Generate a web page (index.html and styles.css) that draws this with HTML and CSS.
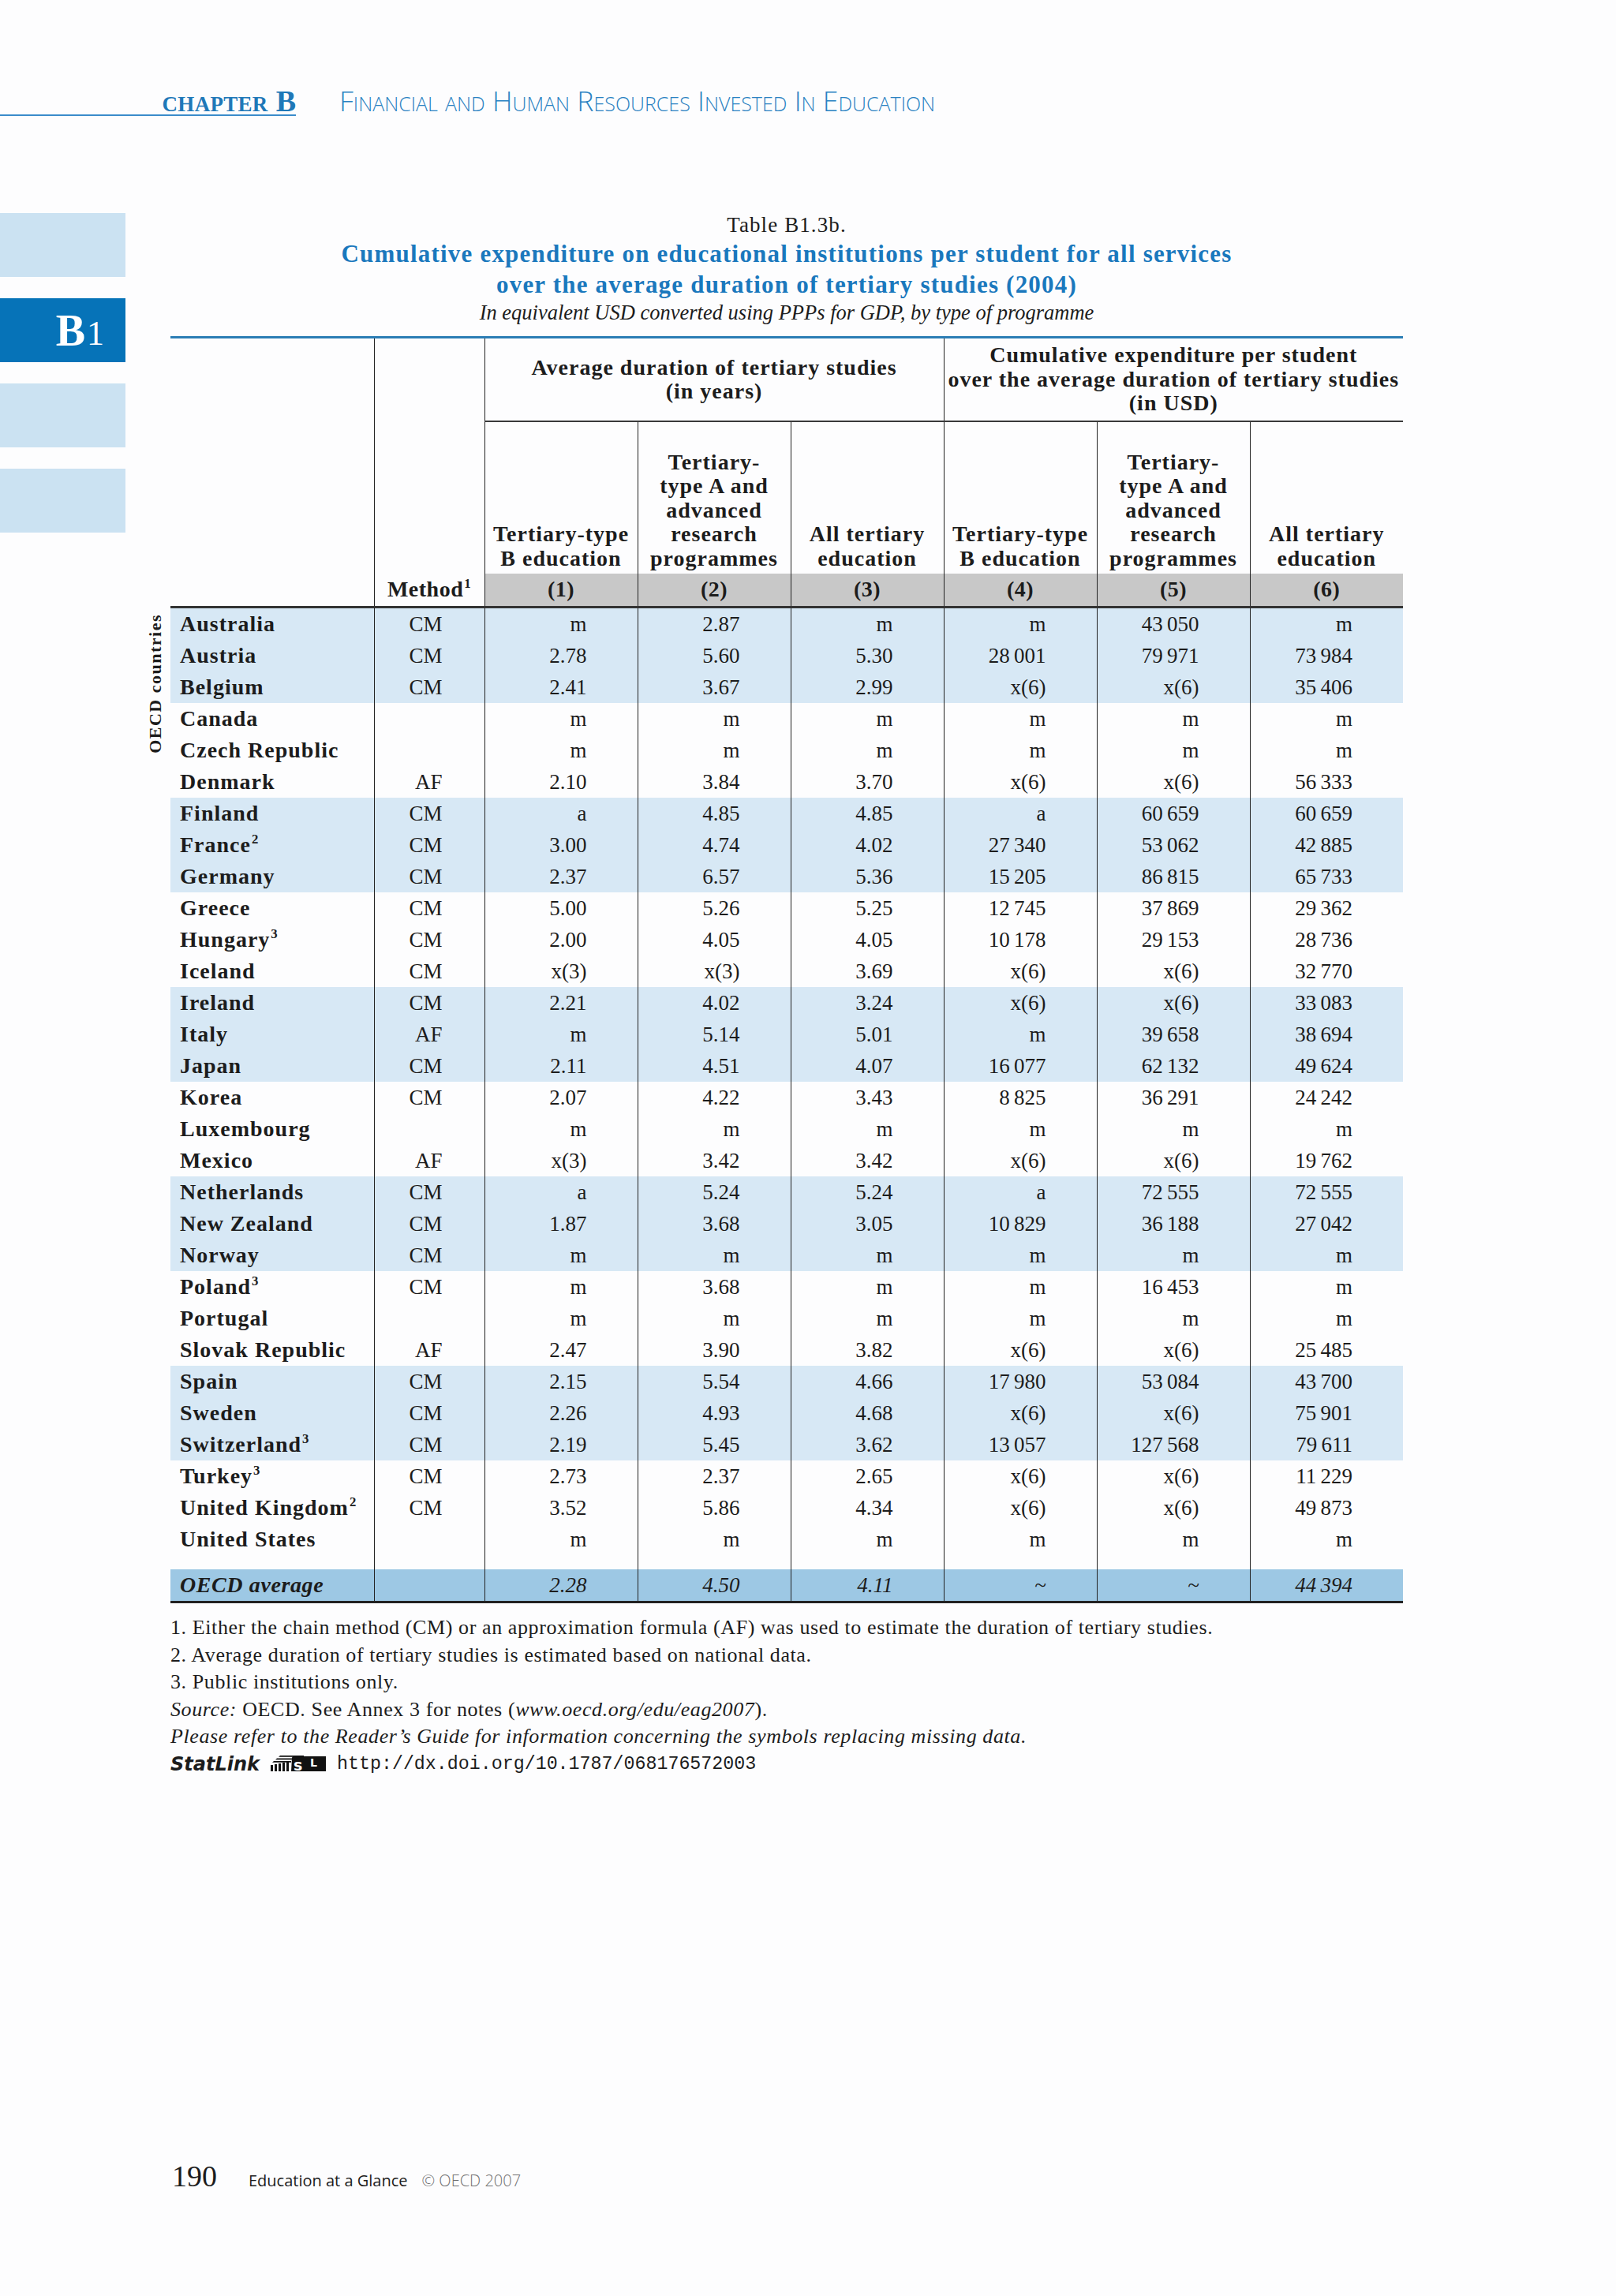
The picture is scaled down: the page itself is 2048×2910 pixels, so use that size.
FILE: index.html
```html
<!DOCTYPE html>
<html lang="en">
<head>
<meta charset="utf-8">
<title>Table B1.3b</title>
<link rel="stylesheet" href="styles.css">
</head>
<body>
<div class="page">
  <header class="running-head">
    <div class="chapter"><span class="word">CHAPTER</span><span class="letter">B</span></div>
    <div class="section-title">Financial and Human Resources Invested In Education</div>
  </header>

  <div class="content">
    <nav class="tabs">
      <div class="tab"></div>
      <div class="tab active"><span class="b">B</span><span class="n">1</span></div>
      <div class="tab"></div>
      <div class="tab"></div>
    </nav>

    <div class="side"><div class="side-label">OECD countries</div></div>

    <main class="main">
      <div class="caption">
        <div class="table-no">Table B1.3b.</div>
        <div class="title">Cumulative expenditure on educational institutions per student for all services<br>over the average duration of tertiary studies (2004)</div>
        <div class="subtitle">In equivalent USD converted using PPPs for GDP, by type of programme</div>
      </div>

      <table class="data">
        <colgroup>
          <col class="c-country"><col class="c-method">
          <col class="c-num"><col class="c-num"><col class="c-num"><col class="c-num"><col class="c-num"><col class="c-num">
        </colgroup>
        <thead>
          <tr class="h-group">
            <th rowspan="3" class="h-country"></th>
            <th rowspan="2" class="h-method"></th>
            <th colspan="3" class="grp">Average duration of tertiary studies<br>(in years)</th>
            <th colspan="3" class="grp">Cumulative expenditure per student<br>over the average duration of tertiary studies<br>(in USD)</th>
          </tr>
          <tr class="h-cols">
            <th>Tertiary-type<br>B education</th>
            <th>Tertiary-<br>type A and<br>advanced<br>research<br>programmes</th>
            <th>All tertiary<br>education</th>
            <th>Tertiary-type<br>B education</th>
            <th>Tertiary-<br>type A and<br>advanced<br>research<br>programmes</th>
            <th>All tertiary<br>education</th>
          </tr>
          <tr class="h-nums">
            <th class="h-methodlbl">Method<sup>1</sup></th>
            <th class="g">(1)</th><th class="g">(2)</th><th class="g">(3)</th><th class="g">(4)</th><th class="g">(5)</th><th class="g">(6)</th>
          </tr>
        </thead>
        <tbody>
          <tr class="band first"><td class="cty">Australia</td><td class="mth">CM</td><td>m</td><td>2.87</td><td>m</td><td>m</td><td>43&thinsp;050</td><td>m</td></tr>
          <tr class="band"><td class="cty">Austria</td><td class="mth">CM</td><td>2.78</td><td>5.60</td><td>5.30</td><td>28&thinsp;001</td><td>79&thinsp;971</td><td>73&thinsp;984</td></tr>
          <tr class="band"><td class="cty">Belgium</td><td class="mth">CM</td><td>2.41</td><td>3.67</td><td>2.99</td><td>x(6)</td><td>x(6)</td><td>35&thinsp;406</td></tr>
          <tr><td class="cty">Canada</td><td class="mth"></td><td>m</td><td>m</td><td>m</td><td>m</td><td>m</td><td>m</td></tr>
          <tr><td class="cty">Czech Republic</td><td class="mth"></td><td>m</td><td>m</td><td>m</td><td>m</td><td>m</td><td>m</td></tr>
          <tr><td class="cty">Denmark</td><td class="mth">AF</td><td>2.10</td><td>3.84</td><td>3.70</td><td>x(6)</td><td>x(6)</td><td>56&thinsp;333</td></tr>
          <tr class="band"><td class="cty">Finland</td><td class="mth">CM</td><td>a</td><td>4.85</td><td>4.85</td><td>a</td><td>60&thinsp;659</td><td>60&thinsp;659</td></tr>
          <tr class="band"><td class="cty">France<sup>2</sup></td><td class="mth">CM</td><td>3.00</td><td>4.74</td><td>4.02</td><td>27&thinsp;340</td><td>53&thinsp;062</td><td>42&thinsp;885</td></tr>
          <tr class="band"><td class="cty">Germany</td><td class="mth">CM</td><td>2.37</td><td>6.57</td><td>5.36</td><td>15&thinsp;205</td><td>86&thinsp;815</td><td>65&thinsp;733</td></tr>
          <tr><td class="cty">Greece</td><td class="mth">CM</td><td>5.00</td><td>5.26</td><td>5.25</td><td>12&thinsp;745</td><td>37&thinsp;869</td><td>29&thinsp;362</td></tr>
          <tr><td class="cty">Hungary<sup>3</sup></td><td class="mth">CM</td><td>2.00</td><td>4.05</td><td>4.05</td><td>10&thinsp;178</td><td>29&thinsp;153</td><td>28&thinsp;736</td></tr>
          <tr><td class="cty">Iceland</td><td class="mth">CM</td><td>x(3)</td><td>x(3)</td><td>3.69</td><td>x(6)</td><td>x(6)</td><td>32&thinsp;770</td></tr>
          <tr class="band"><td class="cty">Ireland</td><td class="mth">CM</td><td>2.21</td><td>4.02</td><td>3.24</td><td>x(6)</td><td>x(6)</td><td>33&thinsp;083</td></tr>
          <tr class="band"><td class="cty">Italy</td><td class="mth">AF</td><td>m</td><td>5.14</td><td>5.01</td><td>m</td><td>39&thinsp;658</td><td>38&thinsp;694</td></tr>
          <tr class="band"><td class="cty">Japan</td><td class="mth">CM</td><td>2.11</td><td>4.51</td><td>4.07</td><td>16&thinsp;077</td><td>62&thinsp;132</td><td>49&thinsp;624</td></tr>
          <tr><td class="cty">Korea</td><td class="mth">CM</td><td>2.07</td><td>4.22</td><td>3.43</td><td>8&thinsp;825</td><td>36&thinsp;291</td><td>24&thinsp;242</td></tr>
          <tr><td class="cty">Luxembourg</td><td class="mth"></td><td>m</td><td>m</td><td>m</td><td>m</td><td>m</td><td>m</td></tr>
          <tr><td class="cty">Mexico</td><td class="mth">AF</td><td>x(3)</td><td>3.42</td><td>3.42</td><td>x(6)</td><td>x(6)</td><td>19&thinsp;762</td></tr>
          <tr class="band"><td class="cty">Netherlands</td><td class="mth">CM</td><td>a</td><td>5.24</td><td>5.24</td><td>a</td><td>72&thinsp;555</td><td>72&thinsp;555</td></tr>
          <tr class="band"><td class="cty">New Zealand</td><td class="mth">CM</td><td>1.87</td><td>3.68</td><td>3.05</td><td>10&thinsp;829</td><td>36&thinsp;188</td><td>27&thinsp;042</td></tr>
          <tr class="band"><td class="cty">Norway</td><td class="mth">CM</td><td>m</td><td>m</td><td>m</td><td>m</td><td>m</td><td>m</td></tr>
          <tr><td class="cty">Poland<sup>3</sup></td><td class="mth">CM</td><td>m</td><td>3.68</td><td>m</td><td>m</td><td>16&thinsp;453</td><td>m</td></tr>
          <tr><td class="cty">Portugal</td><td class="mth"></td><td>m</td><td>m</td><td>m</td><td>m</td><td>m</td><td>m</td></tr>
          <tr><td class="cty">Slovak Republic</td><td class="mth">AF</td><td>2.47</td><td>3.90</td><td>3.82</td><td>x(6)</td><td>x(6)</td><td>25&thinsp;485</td></tr>
          <tr class="band"><td class="cty">Spain</td><td class="mth">CM</td><td>2.15</td><td>5.54</td><td>4.66</td><td>17&thinsp;980</td><td>53&thinsp;084</td><td>43&thinsp;700</td></tr>
          <tr class="band"><td class="cty">Sweden</td><td class="mth">CM</td><td>2.26</td><td>4.93</td><td>4.68</td><td>x(6)</td><td>x(6)</td><td>75&thinsp;901</td></tr>
          <tr class="band"><td class="cty">Switzerland<sup>3</sup></td><td class="mth">CM</td><td>2.19</td><td>5.45</td><td>3.62</td><td>13&thinsp;057</td><td>127&thinsp;568</td><td>79&thinsp;611</td></tr>
          <tr><td class="cty">Turkey<sup>3</sup></td><td class="mth">CM</td><td>2.73</td><td>2.37</td><td>2.65</td><td>x(6)</td><td>x(6)</td><td>11&thinsp;229</td></tr>
          <tr><td class="cty">United Kingdom<sup>2</sup></td><td class="mth">CM</td><td>3.52</td><td>5.86</td><td>4.34</td><td>x(6)</td><td>x(6)</td><td>49&thinsp;873</td></tr>
          <tr><td class="cty">United States</td><td class="mth"></td><td>m</td><td>m</td><td>m</td><td>m</td><td>m</td><td>m</td></tr>
          <tr class="spacer"><td class="cty"></td><td></td><td></td><td></td><td></td><td></td><td></td><td></td></tr>
          <tr class="avg"><td class="cty">OECD average</td><td class="mth"></td><td>2.28</td><td>4.50</td><td>4.11</td><td>~</td><td>~</td><td>44&thinsp;394</td></tr>
        </tbody>
      </table>

      <div class="notes">
        <p>1. Either the chain method (CM) or an approximation formula (AF) was used to estimate the duration of tertiary studies.</p>
        <p>2. Average duration of tertiary studies is estimated based on national data.</p>
        <p>3. Public institutions only.</p>
        <p><em>Source:</em> OECD. See Annex 3 for notes (<em>www.oecd.org/edu/eag2007</em>).</p>
        <p class="please">Please refer to the Reader’s Guide for information concerning the symbols replacing missing data.</p>
        <p class="statlink"><span class="sl-word">StatLink</span>
          <svg class="sl-icon" viewBox="0 0 74 26" width="74" height="26" aria-hidden="true">
            <g fill="#111">
              <path d="M14 2 H44 V3.8 H12 Z"/>
              <path d="M10 5.5 H44 V7.3 H8 Z"/>
              <path d="M6 9 H28 V10.8 H4 Z"/>
              <rect x="2" y="14" width="3" height="8"/>
              <rect x="7" y="13" width="3" height="9"/>
              <rect x="12" y="12" width="3" height="10"/>
              <rect x="17" y="11" width="3" height="11"/>
              <rect x="22" y="10" width="3" height="12"/>
              <path d="M29 5 Q29 3 31 3 H72 V22 H28 Z"/>
            </g>
            <text x="31" y="21" fill="#fff" font-family="DejaVu Sans" font-weight="bold" font-size="19">s</text>
            <text x="52" y="16" fill="#fff" font-family="DejaVu Sans" font-weight="bold" font-size="14">L</text>
          </svg>
          <span class="sl-url">http://dx.doi.org/10.1787/068176572003</span></p>
      </div>
    </main>
  </div>

  <footer class="footer">
    <span class="pg">190</span>
    <span class="pub">Education at a Glance</span>
    <span class="copy">© OECD 2007</span>
  </footer>
</div>
</body>
</html>
```
FILE: styles.css
```css
html, body {
  margin: 0;
  padding: 0;
  background: #fdfdfe;
}
body {
  font-family: "Liberation Serif", "Times New Roman", serif;
  color: #1c1c1c;
}
.page {
  width: 2048px;
  height: 2910px;
  display: flex;
  flex-direction: column;
  overflow: hidden;
}

/* running head */
.running-head {
  height: 148px;
  box-sizing: border-box;
  padding-top: 112px;
  display: flex;
  align-items: baseline;
}
.chapter {
  width: 375px;
  box-sizing: border-box;
  text-align: right;
  color: #1f78b8;
  border-bottom: 2px solid #3b8ccb;
  font-size: 38px;
  line-height: 26px;
  padding-bottom: 0;
  font-weight: bold;
}
.chapter .word {
  font-size: 27px;
  letter-spacing: 0.3px;
}
.chapter .letter {
  font-size: 38px;
  margin-left: 10px;
}
.section-title {
  margin-left: 55px;
  font-family: "Open Sans", "DejaVu Sans", sans-serif;
  font-weight: 300;
  font-variant: small-caps;
  font-size: 35.5px;
  color: #2a82c2;
  line-height: 30px;
}

/* content area */
.content {
  display: flex;
  margin-top: 122px;
}
.tabs {
  width: 159px;
  flex-shrink: 0;
  display: flex;
  flex-direction: column;
  gap: 27px;
}
.tab {
  height: 81px;
  background: #cbe2f2;
}
.tab.active {
  background: #0673b8;
  color: #ffffff;
  display: flex;
  align-items: center;
  justify-content: flex-end;
  padding-right: 27px;
  font-weight: bold;
  line-height: 1;
}
.tab.active .b { font-size: 56px; }
.tab.active .n { font-size: 44px; font-weight: normal; margin-left: 2px; padding-top: 8px; }

.side {
  width: 57px;
  flex-shrink: 0;
  box-sizing: border-box;
  padding-top: 508px;
  padding-left: 26px;
}
.side-label {
  writing-mode: vertical-rl;
  transform: rotate(180deg);
  font-weight: bold;
  font-size: 22px;
  letter-spacing: 1.5px;
  line-height: 24px;
  color: #1c1c1c;
}

.main {
  width: 1562px;
  flex-shrink: 0;
}
.caption {
  text-align: center;
}
.table-no {
  font-size: 27px;
  line-height: 30px;
  letter-spacing: 1.1px;
}
.title {
  margin-top: 2px;
  color: #1a78bd;
  font-weight: bold;
  font-size: 31px;
  line-height: 39px;
  letter-spacing: 1.2px;
}
.subtitle {
  font-style: italic;
  font-size: 26.5px;
  line-height: 32px;
}

/* table */
table.data {
  margin-top: 14px;
  width: 1562px;
  table-layout: fixed;
  border-collapse: collapse;
  border-top: 3px solid #2b7db5;
  font-size: 27px;
}
col.c-country { width: 258px; }
col.c-method { width: 140px; }
col.c-num { width: 194px; }

th {
  font-weight: bold;
  font-size: 28px;
  letter-spacing: 1px;
  line-height: 30.5px;
  padding: 0;
  color: #1c1c1c;
}
.h-group th { height: 104px; }
.h-country { border-right: 1px solid #222; }
.h-method { border-right: 1px solid #222; }
th.grp {
  border-left: 1px solid #222;
  border-bottom: 2px solid #3a3a3a;
  vertical-align: middle;
}
.h-cols th {
  height: 188px;
  vertical-align: bottom;
  padding-bottom: 4px;
  border-left: 1px solid #222;
}
.h-nums th {
  height: 41px;
  vertical-align: middle;
  border-left: 1px solid #222;
  letter-spacing: 0.5px;
}
.h-nums th.g {
  background: #c8c8c8;
}
.h-methodlbl { text-align: center; }

sup {
  font-size: 0.6em;
  line-height: 0;
  vertical-align: 0.65em;
  margin-left: 1px;
}

tbody td {
  height: 40px;
  padding: 0 64px 0 0;
  text-align: right;
  vertical-align: middle;
  line-height: 40px;
  border-left: 1px solid #222;
  white-space: nowrap;
}
tbody td.cty {
  border-left: none;
  text-align: left;
  padding: 0 0 0 12px;
  font-weight: bold;
  font-size: 28px;
  letter-spacing: 1px;
}
tbody td.mth {
  padding-right: 53px;
}
tr.first td { border-top: 3px solid #333; }
tr.band td { background: #d7e8f5; }
tr.spacer td { height: 18px; line-height: 18px; }
tr.avg td {
  height: 39px;
  background: #9dc8e4;
  font-style: italic;
  border-bottom: 3px solid #222;
}
tr.avg td.cty { font-weight: bold; letter-spacing: 0.6px; }

/* notes */
.notes {
  margin-top: 14px;
  font-size: 26px;
  letter-spacing: 0.6px;
  line-height: 34.5px;
}
.notes p { margin: 0; }
.notes .please { font-style: italic; }
.statlink {
  display: flex;
  align-items: center;
  gap: 12px;
  margin-top: 1px;
  letter-spacing: 0;
}
.sl-word {
  font-family: "DejaVu Sans", "Verdana", sans-serif;
  font-weight: bold;
  font-style: italic;
  font-size: 24px;
}
.sl-icon { display: block; }
.sl-url {
  font-family: "Liberation Mono", "Courier New", monospace;
  font-size: 23.3px;
}

/* footer */
.footer {
  margin-top: auto;
  padding: 0 0 133px 218px;
  display: flex;
  align-items: baseline;
  line-height: 1;
}
.footer .pg {
  font-size: 38px;
}
.footer .pub {
  margin-left: 40px;
  font-family: "Open Sans", "DejaVu Sans", sans-serif;
  font-size: 20px;
  color: #1c1c1c;
}
.footer .copy {
  margin-left: 18px;
  font-family: "Open Sans", "DejaVu Sans", sans-serif;
  font-weight: 300;
  font-size: 20px;
  color: #6f6f6f;
}
```
